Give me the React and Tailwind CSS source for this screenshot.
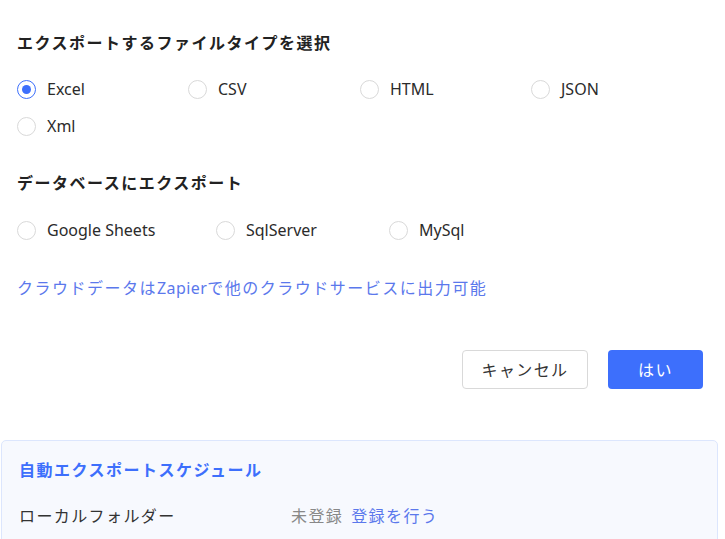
import React, { useState } from 'react';

const fileTypes = ['Excel', 'CSV', 'HTML', 'JSON', 'Xml'];

const databases = [
  { name: 'Google Sheets', width: 'w-[199px]' },
  { name: 'SqlServer', width: 'w-[173px]' },
  { name: 'MySql', width: 'w-[150px]' },
];

const Radio = ({ checked, label, onClick, className = '' }) => (
  <label
    className={`flex items-center gap-[11px] cursor-pointer ${className}`}
    onClick={onClick}
  >
    <span
      className={`flex h-[19px] w-[19px] items-center justify-center rounded-full border bg-white ${
        checked ? 'border-[#3d6ffc]' : 'border-[#d9d9d9]'
      }`}
    >
      {checked && <span className="h-[9px] w-[9px] rounded-full bg-[#3d6ffc]" />}
    </span>
    <span className="text-[16px] text-[#2b2b2b]">{label}</span>
  </label>
);

const App = () => {
  const [fileType, setFileType] = useState('Excel');
  const [db, setDb] = useState(null);

  return (
    <div
      className="w-[725px] h-[539px] overflow-hidden bg-white"
      style={{ fontFamily: '"Noto Sans", "Noto Sans CJK JP", sans-serif' }}
    >
      <div className="px-[17px] pt-[31px]">
        <h2 className="text-[16px] font-bold leading-[24px] tracking-[1.5px] text-[#222]">
          エクスポートするファイルタイプを選択
        </h2>

        <div className="mt-[22px] grid grid-cols-[171px_172px_171px_171px] gap-y-[13px] leading-[24px]">
          {fileTypes.map((t) => (
            <Radio
              key={t}
              label={t}
              checked={fileType === t}
              onClick={() => setFileType(t)}
            />
          ))}
        </div>

        <h2 className="mt-[33px] text-[16px] font-bold leading-[24px] tracking-[1.5px] text-[#222]">
          データベースにエクスポート
        </h2>

        <div className="mt-[23px] flex leading-[24px]">
          {databases.map((d) => (
            <Radio
              key={d.name}
              label={d.name}
              className={d.width}
              checked={db === d.name}
              onClick={() => setDb(d.name)}
            />
          ))}
        </div>

        <a className="mt-[34px] block text-[16px] leading-[24px] tracking-[1.5px] text-[#5b78ec] cursor-pointer">
          クラウドデータは<span className="tracking-[0.4px]">Zapier</span>で他のクラウドサービスに出力可能
        </a>

        <div className="mt-[50px] flex justify-end gap-[20px] pr-[5px]">
          <button className="h-[39px] w-[126px] rounded-[4px] border border-[#d9d9d9] bg-white text-[16px] tracking-[1.4px] text-[#333]">
            キャンセル
          </button>
          <button className="h-[39px] w-[95px] rounded-[4px] bg-[#3d6ffc] text-[16px] tracking-[1.4px] text-white">
            はい
          </button>
        </div>
      </div>

      <div className="mx-[1px] mt-[51px] h-[130px] w-[717px] rounded-[5px] border border-[#dce6fd] bg-[#f7f9fe] px-[17px] pt-[17px]">
        <h3 className="text-[16px] font-bold leading-[24px] tracking-[1.5px] text-[#3d6ffc]">
          自動エクスポートスケジュール
        </h3>
        <div className="mt-[22px] flex text-[16px] leading-[24px] tracking-[1.4px]">
          <span className="w-[272px] text-[#333]">ローカルフォルダー</span>
          <span className="text-[#888]">未登録</span>
          <a className="ml-[8px] text-[#5b78ec] cursor-pointer">登録を行う</a>
        </div>
      </div>
    </div>
  );
};

export default App;
